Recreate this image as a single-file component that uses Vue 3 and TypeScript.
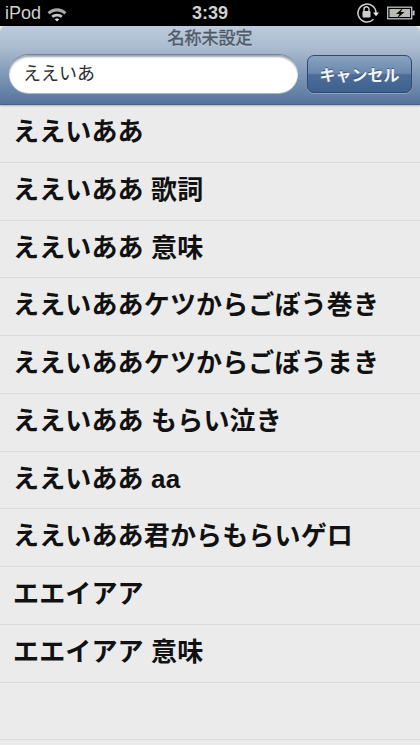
<script setup lang="ts">
const rows: string[] = [
  'ええいああ',
  'ええいああ 歌詞',
  'ええいああ 意味',
  'ええいああケツからごぼう巻き',
  'ええいああケツからごぼうまき',
  'ええいああ もらい泣き',
  'ええいああ aa',
  'ええいああ君からもらいゲロ',
  'エエイアア',
  'エエイアア 意味',
  '',
  '',
]
</script>

<template>
  <div class="screen">
    <div class="status">
      <div class="left">
        <span class="carrier">iPod</span>
        <svg class="wifi" width="22" height="16" viewBox="0 0 22 16">
          <path d="M1.5 6.2C6.8 1 15.2 1 20.5 6.2L18.3 8.4C14.2 4.6 7.8 4.6 3.7 8.4Z" fill="#a8a8a8" />
          <path d="M5.2 9.8C8.4 6.9 13.6 6.9 16.8 9.8L14.8 11.8C12.6 10 9.4 10 7.2 11.8Z" fill="#c8c8c8" />
          <path d="M8.8 13.2C10 12.2 12 12.2 13.2 13.2L11 15.6Z" fill="#e8e8e8" />
        </svg>
      </div>
      <span class="time">3:39</span>
      <div class="right">
        <svg width="24" height="22" viewBox="0 0 24 22">
          <path d="M17.5 17.3A9 9 0 1 1 20 11" fill="none" stroke="#cfcfcf" stroke-width="1.5" />
          <path d="M17 10.5H23L20 14.2Z" fill="#e8e8e8" />
          <rect x="6.5" y="9" width="8" height="6.5" rx="1" fill="#cfcfcf" />
          <path d="M8 9V7.3A2.5 2.5 0 0 1 13 7.3V9" fill="none" stroke="#cfcfcf" stroke-width="1.4" />
        </svg>
        <svg width="28" height="14" viewBox="0 0 28 14">
          <rect x="0.7" y="1.2" width="24" height="11.6" fill="none" stroke="#c0c0c0" stroke-width="1.3" />
          <rect x="2.5" y="3" width="20.5" height="8" fill="#b8bcb4" />
          <rect x="25.4" y="4.6" width="2.2" height="4.8" fill="#c0c0c0" />
          <path d="M16 1.8L9 8H12.5L10 12.5L17.5 6H13.7Z" fill="#0a0a0a" />
        </svg>
      </div>
    </div>

    <header class="bar">
      <div class="title">名称未設定</div>
      <div class="search-row">
        <div class="field">ええいあ</div>
        <button class="cancel" type="button">キャンセル</button>
      </div>
    </header>

    <ul class="list">
      <li v-for="(row, i) in rows" :key="i" class="row">{{ row }}</li>
    </ul>
  </div>
</template>

<style scoped>
.screen {
  width: 420px;
  height: 745px;
  overflow: hidden;
  background: #ebebeb;
  font-family: "Liberation Sans", "Noto Sans CJK JP", sans-serif;
  display: flex;
  flex-direction: column;
}
.status {
  height: 26px;
  flex: none;
  background: #000;
  display: grid;
  grid-template-columns: 1fr auto 1fr;
  align-items: center;
  padding: 0 4px 0 5px;
  box-sizing: border-box;
}
.left {
  display: flex;
  align-items: center;
  gap: 5px;
}
.carrier {
  color: #cfcfcf;
  font-size: 18px;
}
.wifi {
  margin-top: 1px;
}
.time {
  color: #d0d0d0;
  font-size: 18px;
  font-weight: 700;
  margin-left: -1px;
}
.right {
  display: flex;
  justify-content: flex-end;
  align-items: center;
  gap: 7px;
  margin-right: 1px;
}
.bar {
  flex: none;
  height: 79px;
  box-sizing: border-box;
  background: linear-gradient(#bccbdd 0%, #a9bace 30%, #7f98b8 62%, #55749c 100%);
  border-radius: 6px 6px 0 0;
  border-bottom: 1px solid #46628a;
  box-shadow: 0 1px 2px rgba(60, 70, 90, 0.35);
  padding-top: 3px;
}
.title {
  text-align: center;
  font-size: 17px;
  line-height: 20px;
  font-weight: 400;
  -webkit-text-stroke: 0.4px #4e5868;
  color: #4e5868;
  text-shadow: 0 1px 0 rgba(255, 255, 255, 0.35);
}
.search-row {
  display: flex;
  align-items: center;
  gap: 9px;
  padding: 5px 8px 0 9px;
}
.field {
  width: 289px;
  height: 39px;
  box-sizing: border-box;
  background: #fff;
  border-radius: 20px;
  padding: 0 14px;
  font-size: 18px;
  line-height: 38px;
  color: #2c2c2c;
  box-shadow: inset 0 2px 2px rgba(40, 50, 70, 0.45), 0 1px 0 rgba(255, 255, 255, 0.45);
  border-top: 1px solid #6f84a0;
}
.cancel {
  width: 105px;
  height: 38px;
  box-sizing: border-box;
  border: 1px solid #2f4a72;
  border-radius: 7px;
  background: linear-gradient(#8aa2c0 0%, #6a88ad 48%, #4d6d98 52%, #3f618f 100%);
  color: #f2f4f8;
  font-family: inherit;
  font-size: 16px;
  font-weight: 700;
  padding: 0;
  text-shadow: 0 -1px 0 rgba(30, 45, 75, 0.6);
  box-shadow: 0 1px 0 rgba(255, 255, 255, 0.25);
}
.list {
  list-style: none;
  margin: 0;
  padding: 0;
  flex: 1;
}
.row {
  height: 57.75px;
  box-sizing: border-box;
  padding-left: 13px;
  border-bottom: 1px solid #dcdcdc;
  font-size: 26px;
  font-weight: 700;
  letter-spacing: 0.15px;
  line-height: 55px;
  color: #111;
  white-space: nowrap;
}
</style>
